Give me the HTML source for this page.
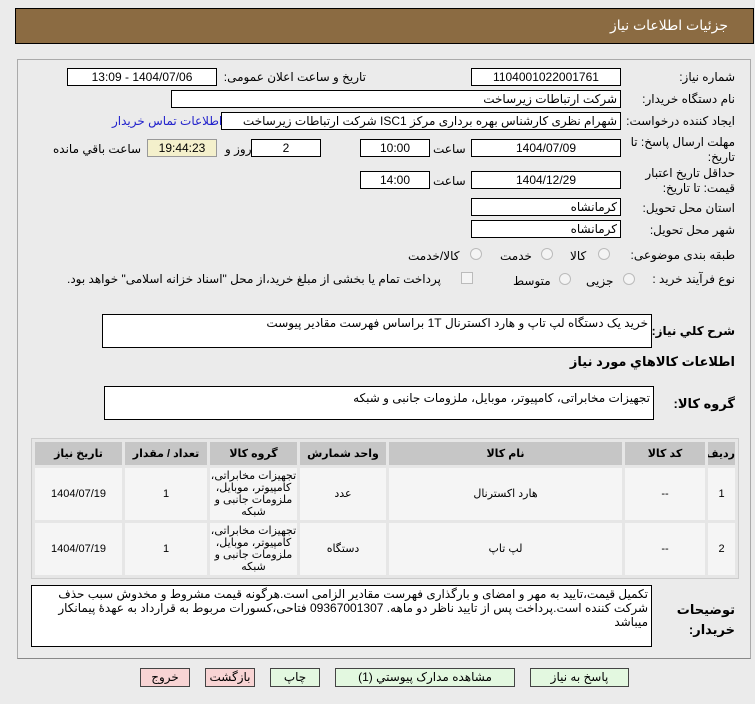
<!DOCTYPE html><html><head><meta charset="utf-8"><style>
*{box-sizing:border-box;margin:0;padding:0}
body{width:755px;height:704px;background:#ebebeb;font-family:"Liberation Sans","DejaVu Sans",sans-serif;font-size:12px;color:#000;position:relative;overflow:hidden;direction:rtl}
.a{position:absolute;white-space:nowrap}
.b{position:absolute;background:#fff;border:1px solid #000;text-align:center;line-height:16px;font-size:12px;white-space:nowrap;overflow:hidden}
.l{position:absolute;text-align:right;white-space:nowrap}
.rad{position:absolute;width:12px;height:12px;border:1px solid #bbb;border-radius:50%;background:#f4f4f4}
.btn{position:absolute;top:668px;height:19px;border:1px solid #444;text-align:center;line-height:17px;font-size:12px}
table{position:absolute;left:31px;top:438px;width:708px;border-collapse:separate;border-spacing:3px;background:#e6e6e6;border:1px solid #ccc;table-layout:fixed}
th{background:#c6c6c6;height:23px;font-size:11px;font-weight:bold;overflow:hidden;white-space:nowrap}
td{background:#f5f5f5;height:52px;text-align:center;font-size:11px;line-height:12px;overflow:hidden}
</style></head><body>
<div class="a" style="left:15px;top:8px;width:739px;height:36px;background:#8b6b42;border:1px solid #000"></div>
<div class="a" style="right:27px;top:17px;color:#fff;font-size:14px">جزئیات اطلاعات نیاز</div>
<div class="a" style="left:17px;top:59px;width:734px;height:600px;border:1px solid #aaa;border-bottom-color:#888"></div>

<div class="l" style="right:20px;top:70px">شماره نیاز:</div>
<div class="b" style="left:471px;top:68px;width:150px;height:18px">1104001022001761</div>
<div class="l" style="right:389px;top:70px">تاریخ و ساعت اعلان عمومی:</div>
<div class="b" style="left:67px;top:68px;width:150px;height:18px">1404/07/06 - 13:09</div>

<div class="l" style="right:20px;top:92px">نام دستگاه خریدار:</div>
<div class="b" style="left:171px;top:90px;width:450px;height:18px;text-align:right;padding-right:3px">شرکت ارتباطات زیرساخت</div>

<div class="l" style="right:20px;top:114px">ایجاد کننده درخواست:</div>
<div class="b" style="left:221px;top:112px;width:400px;height:18px;text-align:right;padding-right:3px">شهرام نظری کارشناس بهره برداری مرکز ISC1 شرکت ارتباطات زیرساخت</div>
<div class="a" style="left:112px;top:114px;color:#2222cc">اطلاعات تماس خریدار</div>

<div class="l" style="right:20px;top:135px;line-height:15px">مهلت ارسال پاسخ: تا<br>تاریخ:</div>
<div class="b" style="left:471px;top:139px;width:150px;height:18px">1404/07/09</div>
<div class="a" style="left:433px;top:142px">ساعت</div>
<div class="b" style="left:360px;top:139px;width:70px;height:18px">10:00</div>
<div class="b" style="left:251px;top:139px;width:70px;height:18px">2</div>
<div class="a" style="left:225px;top:142px">روز و</div>
<div class="b" style="left:147px;top:139px;width:70px;height:18px;background:#f4f0cc;border-color:#999">19:44:23</div>
<div class="a" style="left:53px;top:142px">ساعت باقي مانده</div>

<div class="l" style="right:20px;top:166px;line-height:15px">حداقل تاریخ اعتبار<br>قیمت: تا تاریخ:</div>
<div class="b" style="left:471px;top:171px;width:150px;height:18px">1404/12/29</div>
<div class="a" style="left:433px;top:174px">ساعت</div>
<div class="b" style="left:360px;top:171px;width:70px;height:18px">14:00</div>

<div class="l" style="right:20px;top:201px">استان محل تحویل:</div>
<div class="b" style="left:471px;top:198px;width:150px;height:18px;text-align:right;padding-right:3px">کرمانشاه</div>
<div class="l" style="right:20px;top:223px">شهر محل تحویل:</div>
<div class="b" style="left:471px;top:220px;width:150px;height:18px;text-align:right;padding-right:3px">کرمانشاه</div>

<div class="l" style="right:20px;top:248px">طبقه بندی موضوعی:</div>
<div class="rad" style="left:598px;top:248px"></div><div class="a" style="left:570px;top:249px">کالا</div>
<div class="rad" style="left:541px;top:248px"></div><div class="a" style="left:500px;top:249px">خدمت</div>
<div class="rad" style="left:470px;top:248px"></div><div class="a" style="left:408px;top:249px">کالا/خدمت</div>

<div class="l" style="right:20px;top:272px">نوع فرآیند خرید :</div>
<div class="rad" style="left:623px;top:273px"></div><div class="a" style="left:586px;top:274px">جزیی</div>
<div class="rad" style="left:559px;top:273px"></div><div class="a" style="left:513px;top:274px">متوسط</div>
<div class="a" style="left:461px;top:272px;width:12px;height:12px;border:1px solid #bbb;background:#f4f4f4"></div>
<div class="a" style="left:67px;top:272px">پرداخت تمام یا بخشی از مبلغ خرید،از محل "اسناد خزانه اسلامی" خواهد بود.</div>

<div class="l" style="right:20px;top:324px;font-weight:bold;font-size:12px">شرح کلي نياز:</div>
<div class="b" style="left:102px;top:314px;width:550px;height:34px;text-align:right;padding-right:3px">خرید یک دستگاه لپ تاپ و هارد اکسترنال 1T براساس فهرست مقادیر پیوست</div>
<div class="l" style="right:20px;top:354px;font-weight:bold;font-size:13px">اطلاعات کالاهاي مورد نياز</div>
<div class="l" style="right:20px;top:396px;font-weight:bold;font-size:13px">گروه کالا:</div>
<div class="b" style="left:104px;top:386px;width:550px;height:34px;text-align:right;padding-right:3px;padding-top:3px">تجهیزات مخابراتی، کامپیوتر، موبایل، ملزومات جانبی و شبکه</div>

<table>
<colgroup><col style="width:27px"><col style="width:80px"><col style="width:233px"><col style="width:86px"><col style="width:87px"><col style="width:82px"><col></colgroup>
<tr><th>رديف</th><th>کد کالا</th><th>نام کالا</th><th>واحد شمارش</th><th>گروه کالا</th><th>تعداد / مقدار</th><th>تاریخ نیاز</th></tr>
<tr><td>1</td><td>--</td><td>هارد اکسترنال</td><td>عدد</td><td>تجهیزات مخابراتی، کامپیوتر، موبایل، ملزومات جانبی و شبکه</td><td>1</td><td>1404/07/19</td></tr>
<tr><td>2</td><td>--</td><td>لپ تاپ</td><td>دستگاه</td><td>تجهیزات مخابراتی، کامپیوتر، موبایل، ملزومات جانبی و شبکه</td><td>1</td><td>1404/07/19</td></tr>
</table>

<div class="l" style="right:20px;top:600px;font-weight:bold;font-size:13px;line-height:20px;text-align:right">توضیحات<br>خریدار:</div>
<div class="b" style="left:31px;top:585px;width:621px;height:62px;text-align:right;padding:1px 3px;white-space:normal;line-height:14px">تکمیل قیمت،تایید به مهر و امضای و بارگذاری فهرست مقادیر الزامی است.هرگونه قیمت مشروط و مخدوش سبب حذف شرکت کننده است.پرداخت پس از تایید ناظر دو ماهه. 09367001307 فتاحی،کسورات مربوط به قرارداد به عهدهٔ پیمانکار میباشد</div>

<div class="btn" style="left:530px;width:99px;background:#e3f8e0">پاسخ به نیاز</div>
<div class="btn" style="left:335px;width:180px;background:#e3f8e0">مشاهده مدارک پیوستي (1)</div>
<div class="btn" style="left:270px;width:50px;background:#e3f8e0">چاپ</div>
<div class="btn" style="left:205px;width:50px;background:#f8d4d4">بازگشت</div>
<div class="btn" style="left:140px;width:50px;background:#f8d4d4">خروج</div>
</body></html>
